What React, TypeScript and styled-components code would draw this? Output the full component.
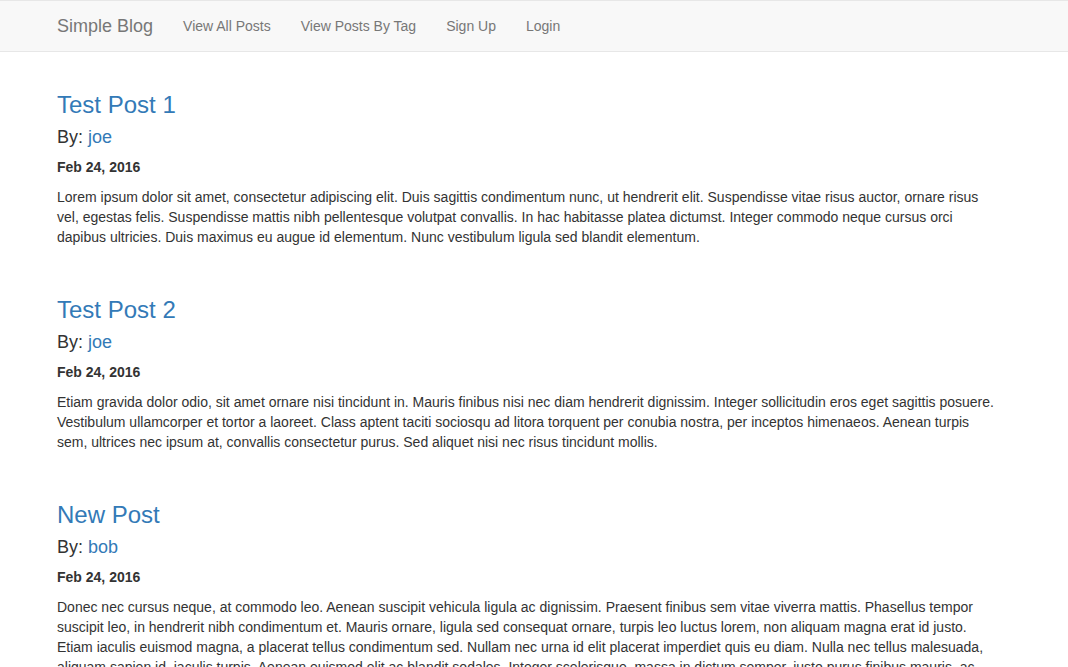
import React from "react";
import styled, { createGlobalStyle } from "styled-components";

const GlobalStyle = createGlobalStyle`
  html, body { margin: 0; padding: 0; background: #fff; }
  body {
    font-family: "Liberation Sans", Arial, Helvetica, sans-serif;
    font-size: 14px;
    line-height: 1.42857143;
    color: #333;
  }
  * { box-sizing: border-box; }
`;

const Navbar = styled.nav`
  min-height: 50px;
  background: #f8f8f8;
  border-top: 1px solid #e7e7e7;
  border-bottom: 1px solid #e7e7e7;
  margin-bottom: 20px;
`;

const Container = styled.div`
  width: 970px;
  margin-left: 42px;
  padding: 0 15px;
`;

const NavInner = styled(Container)`
  display: flex;
  align-items: center;
  height: 50px;
`;

const Brand = styled.a`
  font-size: 18px;
  line-height: 20px;
  color: #777;
  text-decoration: none;
  padding: 15px 15px 15px 0;
`;

const NavLink = styled.a`
  font-size: 14px;
  line-height: 20px;
  color: #777;
  text-decoration: none;
  padding: 15px;
`;

const Post = styled.article`
  display: flow-root;
  margin-bottom: 19.8px;
`;

const Title = styled.h3`
  font-size: 24px;
  font-weight: 500;
  line-height: 1.1;
  margin: 20px 0 10px;
  color: #337ab7;
`;

const Author = styled.h4`
  font-size: 18px;
  font-weight: 500;
  line-height: 1.1;
  margin: 10px 0 9px;
`;

const Link = styled.a`
  color: #337ab7;
  text-decoration: none;
`;

const DateLine = styled.p`
  margin: 0 0 10px;
  font-weight: bold;
`;

const Body = styled.p`
  margin: 0 0 10px;
`;

const posts = [
  {
    title: "Test Post 1",
    author: "joe",
    date: "Feb 24, 2016",
    body: "Lorem ipsum dolor sit amet, consectetur adipiscing elit. Duis sagittis condimentum nunc, ut hendrerit elit. Suspendisse vitae risus auctor, ornare risus vel, egestas felis. Suspendisse mattis nibh pellentesque volutpat convallis. In hac habitasse platea dictumst. Integer commodo neque cursus orci dapibus ultricies. Duis maximus eu augue id elementum. Nunc vestibulum ligula sed blandit elementum.",
  },
  {
    title: "Test Post 2",
    author: "joe",
    date: "Feb 24, 2016",
    body: "Etiam gravida dolor odio, sit amet ornare nisi tincidunt in. Mauris finibus nisi nec diam hendrerit dignissim. Integer sollicitudin eros eget sagittis posuere. Vestibulum ullamcorper et tortor a laoreet. Class aptent taciti sociosqu ad litora torquent per conubia nostra, per inceptos himenaeos. Aenean turpis sem, ultrices nec ipsum at, convallis consectetur purus. Sed aliquet nisi nec risus tincidunt mollis.",
  },
  {
    title: "New Post",
    author: "bob",
    date: "Feb 24, 2016",
    body: "Donec nec cursus neque, at commodo leo. Aenean suscipit vehicula ligula ac dignissim. Praesent finibus sem vitae viverra mattis. Phasellus tempor suscipit leo, in hendrerit nibh condimentum et. Mauris ornare, ligula sed consequat ornare, turpis leo luctus lorem, non aliquam magna erat id justo. Etiam iaculis euismod magna, a placerat tellus condimentum sed. Nullam nec urna id elit placerat imperdiet quis eu diam. Nulla nec tellus malesuada, aliquam sapien id, iaculis turpis. Aenean euismod elit ac blandit sodales. Integer scelerisque, massa in dictum semper, justo purus finibus mauris, ac ultrices ligula nisi vel nunc.",
  },
];

export default function App() {
  return (
    <>
      <GlobalStyle />
      <Navbar>
        <NavInner>
          <Brand href="#">Simple Blog</Brand>
          <NavLink href="#">View All Posts</NavLink>
          <NavLink href="#">View Posts By Tag</NavLink>
          <NavLink href="#">Sign Up</NavLink>
          <NavLink href="#">Login</NavLink>
        </NavInner>
      </Navbar>
      <Container>
        {posts.map((p) => (
          <Post key={p.title}>
            <Title>{p.title}</Title>
            <Author>
              By: <Link href="#">{p.author}</Link>
            </Author>
            <DateLine>{p.date}</DateLine>
            <Body>{p.body}</Body>
          </Post>
        ))}
      </Container>
    </>
  );
}
